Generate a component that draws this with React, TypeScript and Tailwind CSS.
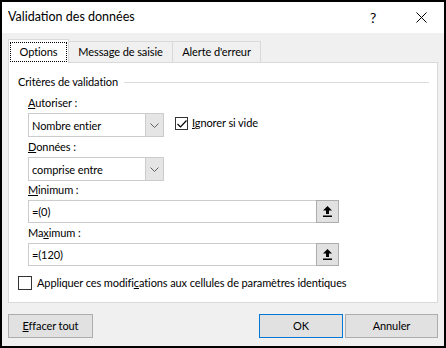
import React from 'react';

const font = { fontFamily: 'Lato, "Noto Sans", Arial, sans-serif' };

const Chevron = () => (
  <svg width="9" height="5" viewBox="0 0 9 5" fill="none" stroke="#606060" strokeWidth="1">
    <path d="M0.5 0.5 L4.5 4.5 L8.5 0.5" />
  </svg>
);

const UploadIcon = () => (
  <svg width="9" height="11" viewBox="0 0 9 11" fill="#000">
    <path d="M4.5 0 L9 4.5 L6 4.5 L6 8 L3 8 L3 4.5 L0 4.5 Z" />
    <rect x="0" y="9.5" width="9" height="1.5" />
  </svg>
);

const Select = ({ value }: { value: string }) => (
  <div className="w-[136px] h-[24px] border border-[#cccccc] bg-white flex items-stretch">
    <div className="flex-1 flex items-center pl-[3px] leading-none">{value}</div>
    <div className="w-[18px] bg-[#e5e5e5] border-l border-[#cccccc] flex items-center justify-center">
      <Chevron />
    </div>
  </div>
);

const RefInput = ({ value }: { value: string }) => (
  <div className="w-[311px] h-[23px] border border-[#cccccc] bg-white flex items-stretch">
    <div className="flex-1 flex items-center pl-[3px] leading-none">{value}</div>
    <div className="w-[23px] -my-px -mr-px bg-[#e1e1e1] border border-[#adadad] flex items-center justify-center">
      <UploadIcon />
    </div>
  </div>
);

const Label = ({ children, top = 'mt-[2px]' }: { children: React.ReactNode; top?: string }) => (
  <div className={`h-[16px] leading-[16px] mb-[2px] ${top}`}>{children}</div>
);

const Btn = ({ children, w, primary }: { children: React.ReactNode; w: string; primary?: boolean }) => (
  <div
    className={`${w} h-[24px] flex items-center justify-center bg-[#e1e1e1] border ${
      primary ? 'border-[#0078d7]' : 'border-[#adadad]'
    }`}
  >
    {children}
  </div>
);

export default function App() {
  return (
    <div
      className="w-[446px] h-[348px] border-2 border-black bg-[#f0f0f0] flex flex-col text-black text-[11px] tracking-[-0.1px]"
      style={font}
    >
      {/* title bar */}
      <div className="h-[31px] bg-white flex items-center pl-[6px] shrink-0">
        <div className="text-[12.5px] tracking-normal flex-1">Validation des données</div>
        <div className="w-[20px] text-center text-[14px] mr-[33px]">?</div>
        <svg width="11" height="11" viewBox="0 0 11 11" stroke="#000" strokeWidth="1" className="mr-[17px]">
          <path d="M0.5 0.5 L10.5 10.5 M10.5 0.5 L0.5 10.5" />
        </svg>
      </div>

      <div className="px-[6px] flex-1 flex flex-col">
        {/* tabs */}
        <div className="flex items-end h-[23px] mt-[6px]">
          <div className="w-[61px] h-[24px] bg-white border border-b-0 border-[#d9d9d9] pt-[2px] px-[1px] relative z-10 -mb-px">
            <div className="h-[20px] border border-dotted border-black flex items-center justify-center">Options</div>
          </div>
          <div className="w-[104px] h-[21px] border border-[#d9d9d9] border-l-0 border-b-0 flex items-center justify-center">
            Message de saisie
          </div>
          <div className="w-[88px] h-[21px] border border-[#d9d9d9] border-l-0 border-b-0 flex items-center justify-center">
            Alerte d'erreur
          </div>
        </div>

        {/* panel */}
        <div className="h-[241px] bg-white border border-[#d9d9d9] pl-[9px] pt-[11px]">
          <div className="flex items-center h-[16px] pr-[8px]">
            <span className="pr-[6px]">Critères de validation</span>
            <div className="flex-1 h-px bg-[#dcdcdc]" />
          </div>

          <div className="pl-[10px] mt-[5px]">
            <Label>
              <u>A</u>utoriser :
            </Label>
            <div className="flex items-center gap-[11px]">
              <Select value="Nombre entier" />
              <div className="flex items-center gap-[4px] -mt-[3px]">
                <div className="w-[13px] h-[13px] border border-[#333] bg-white flex items-center justify-center">
                  <svg width="10" height="8" viewBox="0 0 10 8" fill="none" stroke="#000" strokeWidth="1.2">
                    <path d="M0.5 4 L3.5 7 L9.5 0.5" />
                  </svg>
                </div>
                <span>
                  <u>I</u>gnorer si vide
                </span>
              </div>
            </div>

            <Label>
              <u>D</u>onnées :
            </Label>
            <Select value="comprise entre" />

            <Label top="mt-[1px]">
              <u>M</u>inimum :
            </Label>
            <RefInput value="=(0)" />

            <Label>
              Ma<u>x</u>imum :
            </Label>
            <RefInput value="=(120)" />
          </div>

          <div className="flex items-center gap-[5px] mt-[9px]">
            <div className="w-[14px] h-[14px] border border-[#333] bg-white" />
            <span>
              Appliquer ces modifi<u>c</u>ations aux cellules de paramètres identiques
            </span>
          </div>
        </div>

        {/* buttons */}
        <div className="flex items-center mt-[11px]">
          <Btn w="w-[85px]">
            <span>
              <u>E</u>ffacer tout
            </span>
          </Btn>
          <div className="flex-1" />
          <Btn w="w-[84px]" primary>
            OK
          </Btn>
          <div className="w-[2px]" />
          <Btn w="w-[93px]">Annuler</Btn>
        </div>
      </div>
    </div>
  );
}
